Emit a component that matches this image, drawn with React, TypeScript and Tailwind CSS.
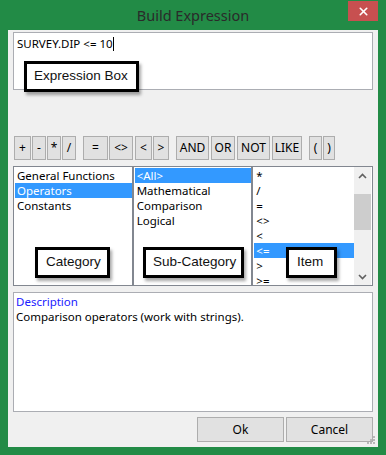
import { X } from "lucide-react";

const font = "font-['Noto_Sans',sans-serif]";

// operator buttons: label, left gap, width
const ops: [string, number, number][] = [
	["+", 1, 17],
	["-", 1, 14],
	["*", 1, 14],
	["/", 1, 14],
	["=", 7, 25],
	["<>", 1, 24],
	["<", 2, 17],
	[">", 1, 16],
	["AND", 7, 33],
	["OR", 2, 24],
	["NOT", 2, 33],
	["LIKE", 2, 30],
	["(", 7, 13],
	[")", 1, 12],
];

const categories = ["General Functions", "Operators", "Constants"];
const subCategories = ["<All>", "Mathematical", "Comparison", "Logical"];
const items = ["*", "/", "=", "<>", "<", "<=", ">", ">="];

const Callout = ({ label, className }: { label: string; className: string }) => (
	<div
		className={`absolute h-[31px] border-[3px] border-black bg-white shadow-[2px_3px_3px_rgba(0,0,0,0.35)] flex items-center font-['Liberation_Sans',sans-serif] text-[13.5px] text-[#111] ${className}`}
	>
		{label}
	</div>
);

const ListBox = ({
	rows,
	selected,
	className,
}: {
	rows: string[];
	selected: number;
	className: string;
}) => (
	<div className={`h-full border border-[#828790] bg-white pt-[1px] pl-[1px] ${className}`}>
		{rows.map((row, i) => (
			<div
				key={row}
				className={`h-[15px] leading-[15px] pl-[2px] whitespace-nowrap ${
					i === selected ? "bg-[#3399ff] text-white" : "text-black"
				}`}
			>
				{row}
			</div>
		))}
	</div>
);

const Chevron = ({ up }: { up?: boolean }) => (
	<svg width="9" height="6" viewBox="0 0 9 6" className={up ? "" : "rotate-180"}>
		<path d="M1 5 L4.5 1.5 L8 5" fill="none" stroke="#606060" strokeWidth="1.6" />
	</svg>
);

export default function App() {
	return (
		<div className={`relative w-[386px] h-[455px] bg-[#228b46] flex flex-col ${font} text-[11.5px]`}>
			{/* title bar */}
			<div className="h-[30px] flex items-start">
				<div className="w-[38px]" />
				<div className="flex-1 text-center text-[14.5px] text-[#2a2a2a] pt-[5px] leading-[20px]">
					Build Expression
				</div>
				<div className="w-[30px] h-[20px] mt-[1px] mr-[8px] bg-[#c75050] flex items-center justify-center">
					<X size={13} strokeWidth={3} color="white" />
				</div>
			</div>

			{/* client area */}
			<div className="relative flex-1 mx-[8px] mb-[8px] bg-[#f0f0f0] px-[5px] flex flex-col">
				{/* expression box */}
				<div className="mt-[2px] h-[58px] border border-[#abadb3] bg-white px-[3px] pt-[3px] leading-[15px] text-black">
					SURVEY.DIP &lt;= 10
					<span className="inline-block w-[1px] h-[14px] bg-black align-middle -mt-[2px]" />
				</div>

				{/* operators */}
				<div className="mt-[46px] h-[24px] flex">
					{ops.map(([label, gap, w]) => (
						<div
							key={label}
							style={{ marginLeft: gap, width: w }}
							className="h-full border border-[#adadad] bg-[#e1e1e1] flex items-center justify-center text-black text-[12px]"
						>
							{label}
						</div>
					))}
				</div>

				{/* lists */}
				<div className="mt-[6px] h-[120px] flex">
					<ListBox rows={categories} selected={1} className="w-[120px]" />
					<ListBox rows={subCategories} selected={0} className="w-[120px]" />
					<div className="w-[121px] h-full border border-[#828790] bg-white pt-[1px] pl-[1px] flex">
						<div className="flex-1 overflow-hidden">
							{items.map((row, i) => (
								<div
									key={row}
									className={`h-[15px] leading-[15px] pl-[2px] ${
										i === 5 ? "bg-[#3399ff] text-white" : "text-black"
									}`}
								>
									{row}
								</div>
							))}
						</div>
						<div className="w-[17px] bg-[#f0f0f0] flex flex-col items-center -mt-[1px] mr-[1px]">
							<div className="h-[17px] flex items-center justify-center">
								<Chevron up />
							</div>
							<div className="mt-[10px] w-full h-[36px] bg-[#cdcdcd]" />
							<div className="flex-1" />
							<div className="h-[17px] flex items-center justify-center">
								<Chevron />
							</div>
						</div>
					</div>
				</div>

				{/* description */}
				<div className="mt-[6px] h-[120px] border border-[#abadb3] bg-white px-[2px] pt-[1px] leading-[15px]">
					<div className="text-[#2020ff]">Description</div>
					<div className="text-black">Comparison operators (work with strings).</div>
				</div>

				{/* footer */}
				<div className="mt-[5px] flex justify-end gap-[2px]">
					<div className="w-[87px] h-[25px] border border-[#adadad] bg-[#e1e1e1] flex items-center justify-center text-black text-[12px]">
						Ok
					</div>
					<div className="w-[87px] h-[25px] border border-[#adadad] bg-[#e1e1e1] flex items-center justify-center text-black text-[12px]">
						Cancel
					</div>
				</div>

				{/* size grip */}
				<svg width="10" height="10" className="absolute right-[2px] bottom-[1px]">
					<rect x="7" y="0" width="2" height="2" fill="#b8b8b8" />
					<rect x="4" y="3" width="2" height="2" fill="#b8b8b8" />
					<rect x="7" y="3" width="2" height="2" fill="#b8b8b8" />
					<rect x="1" y="6" width="2" height="2" fill="#b8b8b8" />
					<rect x="4" y="6" width="2" height="2" fill="#b8b8b8" />
					<rect x="7" y="6" width="2" height="2" fill="#b8b8b8" />
				</svg>
			</div>

			{/* callouts */}
			<Callout label="Expression Box" className="left-[24px] top-[61px] w-[115px] pl-[7px]" />
			<Callout label="Category" className="left-[35px] top-[247px] w-[75px] pl-[8px]" />
			<Callout label="Sub-Category" className="left-[143px] top-[247px] w-[101px] pl-[7px]" />
			<Callout label="Item" className="left-[286px] top-[247px] w-[51px] pl-[8px]" />
		</div>
	);
}
